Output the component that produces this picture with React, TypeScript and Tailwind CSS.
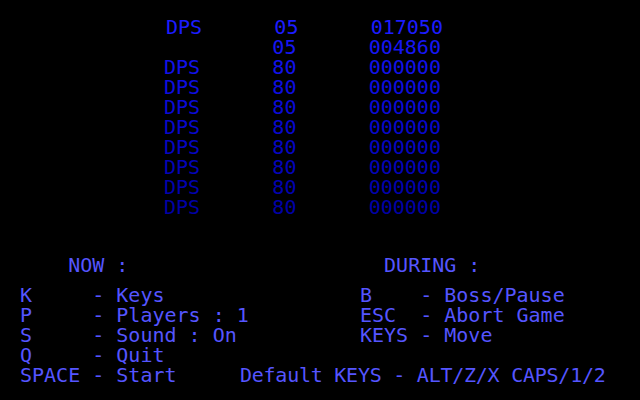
import React from "react";

const rows: { a: string; b: string; c: string; color: string; shift?: boolean }[] = [
  { a: "DPS", b: "05", c: "017050", color: "#1c1cff", shift: true },
  { a: "   ", b: "05", c: "004860", color: "#1616f4" },
  { a: "DPS", b: "80", c: "000000", color: "#1212ea" },
  { a: "DPS", b: "80", c: "000000", color: "#0e0ee0" },
  { a: "DPS", b: "80", c: "000000", color: "#0b0bd6" },
  { a: "DPS", b: "80", c: "000000", color: "#0808cc" },
  { a: "DPS", b: "80", c: "000000", color: "#0606c2" },
  { a: "DPS", b: "80", c: "000000", color: "#0404b8" },
  { a: "DPS", b: "80", c: "000000", color: "#0202ae" },
  { a: "DPS", b: "80", c: "000000", color: "#0000a6" },
];

export default function App() {
  return (
    <div
      className="w-[640px] h-[400px] bg-black overflow-hidden flex flex-col text-[20px] leading-[20px] whitespace-pre"
      style={{ fontFamily: '"DejaVu Sans Mono", monospace' }}
    >
      <div className="pt-[17px] flex flex-col">
        {rows.map((r, i) => (
          <div
            key={i}
            className={`h-[20px] ${r.shift ? "pl-[166px]" : "pl-[164px]"}`}
            style={{ color: r.color }}
          >
            {`${r.a}      ${r.b}      ${r.c}`}
          </div>
        ))}
      </div>
      <div className="mt-[38px] flex text-[#5555ff]">
        <div className="w-[340px] pl-[20px] flex flex-col">
          <div className="h-[20px]">{"    NOW :"}</div>
          <div className="mt-[10px] h-[20px]">{"K     - Keys"}</div>
          <div className="h-[20px]">{"P     - Players : 1"}</div>
          <div className="h-[20px]">{"S     - Sound : On"}</div>
          <div className="h-[20px]">{"Q     - Quit"}</div>
        </div>
        <div className="flex flex-col pl-[20px]">
          <div className="h-[20px]">{"  DURING :"}</div>
          <div className="mt-[10px] h-[20px]">{"B    - Boss/Pause"}</div>
          <div className="h-[20px]">{"ESC  - Abort Game"}</div>
          <div className="h-[20px]">{"KEYS - Move"}</div>
        </div>
      </div>
      <div className="flex h-[20px] text-[#5555ff]">
        <div className="w-[240px] pl-[20px]">{"SPACE - Start"}</div>
        <div className="tracking-[-0.25px]">{"Default KEYS - ALT/Z/X CAPS/1/2"}</div>
      </div>
    </div>
  );
}
